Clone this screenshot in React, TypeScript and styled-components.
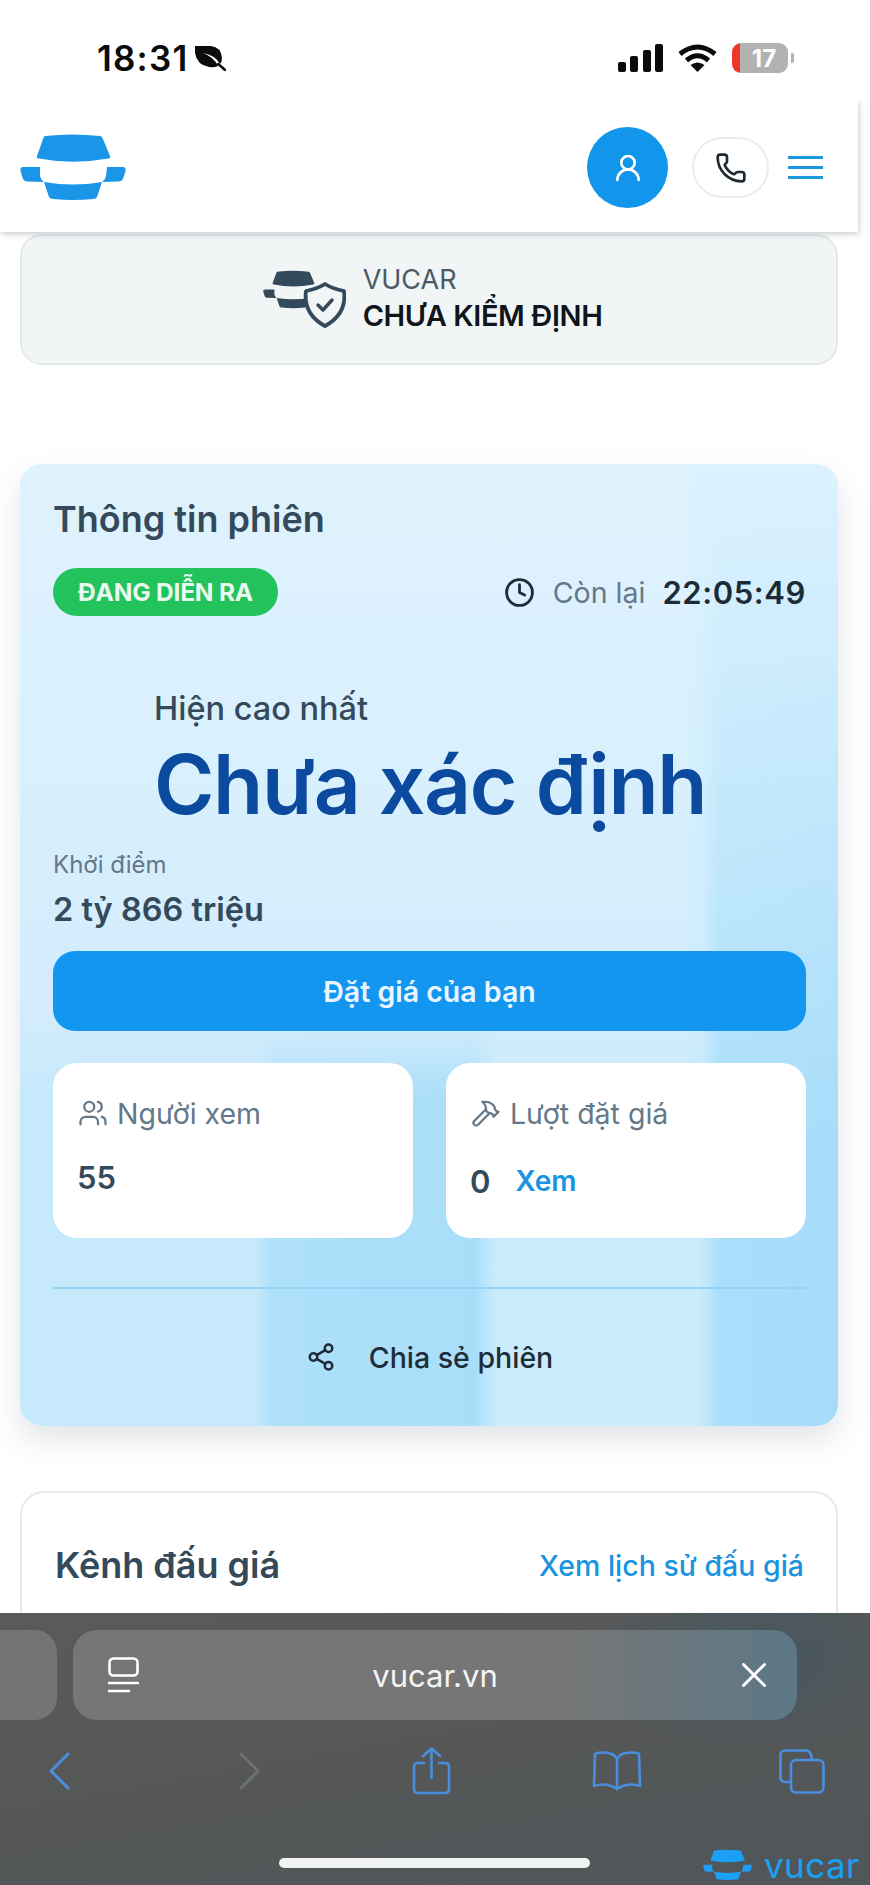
import React from "react";
import styled, { createGlobalStyle } from "styled-components";
import { UserRound, Phone, Clock, Users, Hammer, Share2, X } from "lucide-react";

const Global = createGlobalStyle`
  html, body { margin: 0; padding: 0; background: #fff; }
  * { box-sizing: border-box; }
  body { font-family: Inter, "Liberation Sans", sans-serif; }
`;

const Page = styled.div`
  position: relative;
  width: 870px;
  height: 1885px;
  display: flex;
  flex-direction: column;
  overflow: hidden;
  background: #fff;
`;

const StatusBar = styled.div`
  height: 100px;
  flex: none;
  display: flex;
  align-items: flex-start;
  justify-content: space-between;
  padding: 43px 82px 0 97px;
  background: #fff;
`;
const StatusLeft = styled.div`
  display: flex;
  align-items: center;
  gap: 6px;
  height: 30px;
`;
const Time = styled.span`
  font-size: 35px;
  font-weight: 600;
  line-height: 30px;
  color: #0b0b0b;
  letter-spacing: 1.2px;
`;
const StatusRight = styled.div`
  display: flex;
  align-items: center;
  gap: 15px;
  height: 30px;
`;
const Battery = styled.div`
  position: relative;
  width: 56px;
  height: 30px;
  border-radius: 9px;
  background: linear-gradient(to right, #ee3527 0 8px, #b2b2b2 8px);
  display: flex;
  align-items: center;
  justify-content: center;
  padding-left: 8px;
  color: #fff;
  font-size: 24px;
  font-weight: 700;
  &::after {
    content: "";
    position: absolute;
    right: -6px;
    top: 10px;
    width: 3px;
    height: 10px;
    border-radius: 0 2px 2px 0;
    background: #b2b2b2;
  }
`;

const Header = styled.header`
  position: relative;
  z-index: 2;
  flex: none;
  width: 858px;
  height: 132px;
  background: #fff;
  display: flex;
  align-items: center;
  justify-content: space-between;
  padding: 3px 35px 0 20px;
  box-shadow: 1px 2px 6px rgba(60, 70, 75, 0.28);
  clip-path: inset(0 -10px -14px 0);
`;
const HeaderActions = styled.div`
  display: flex;
  align-items: center;
`;
const Avatar = styled.div`
  width: 81px;
  height: 81px;
  border-radius: 50%;
  background: #1296eb;
  color: #fff;
  display: flex;
  align-items: center;
  justify-content: center;
`;
const PhoneButton = styled.div`
  width: 77px;
  height: 61px;
  margin-left: 24px;
  border-radius: 31px;
  background: #fff;
  border: 2px solid #e9ecec;
  color: #1e2a32;
  display: flex;
  align-items: center;
  justify-content: center;
`;
const Burger = styled.div`
  width: 35px;
  margin-left: 19px;
  display: flex;
  flex-direction: column;
  gap: 7px;
  span {
    display: block;
    height: 3px;
    background: #1d97e0;
  }
`;

const Content = styled.main`
  flex: 1;
  min-height: 0;
  overflow: hidden;
  padding: 2px 32px 0 20px;
`;
const InspectCard = styled.section`
  height: 131px;
  border-radius: 22px;
  border: 2px solid #e3e9eb;
  background: #f1f5f6;
  display: flex;
  align-items: center;
  justify-content: center;
  gap: 17px;
  padding: 0 0 4px 6px;
`;
const InspectText = styled.div`
  display: flex;
  flex-direction: column;
`;
const InspectBrand = styled.span`
  font-size: 27px;
  line-height: 36px;
  color: #4a5a66;
`;
const InspectStatus = styled.span`
  font-size: 29px;
  line-height: 36px;
  font-weight: 600;
  color: #0f151a;
  letter-spacing: -0.4px;
`;

const InfoCard = styled.section`
  margin-top: 99px;
  height: 962px;
  border-radius: 22px;
  padding: 33px 32px 0 33px;
  box-shadow: 0 14px 30px rgba(70, 90, 105, 0.16);
  background:
    linear-gradient(to bottom, #dff3fe 0%, #d9f0fd 30%, #d2ecfc 58%, rgba(210, 236, 252, 0) 66%) left top / 670px 100% no-repeat,
    linear-gradient(to bottom, #dcf2fe 0%, rgba(220, 242, 254, 0) 72%) right top / 150px 100% no-repeat,
    linear-gradient(to right, #c6e9fc 0, #c6e9fc 236px, #aee0fa 252px, #a9def9 455px, #c9ebfc 475px, #c9ebfc 680px, #aadffa 700px, #a6dcfa 100%);
`;
const CardTitle = styled.h2`
  margin: 0;
  font-size: 36px;
  line-height: 44px;
  font-weight: 600;
  color: #34495a;
`;
const MetaRow = styled.div`
  margin-top: 27px;
  display: flex;
  align-items: center;
  justify-content: space-between;
`;
const Badge = styled.span`
  height: 48px;
  width: 225px;
  border-radius: 24px;
  background: #22c25c;
  color: #eaf9ef;
  font-size: 24.5px;
  font-weight: 700;
  letter-spacing: -0.2px;
  display: flex;
  align-items: center;
  justify-content: center;
`;
const Countdown = styled.div`
  display: flex;
  align-items: center;
  color: #1e2d38;
`;
const RemainLabel = styled.span`
  margin-left: 18px;
  font-size: 28.5px;
  color: #64788a;
`;
const RemainTime = styled.span`
  margin-left: 17px;
  font-size: 31px;
  font-weight: 600;
  color: #1c2b36;
  letter-spacing: 0.6px;
`;
const Highest = styled.div`
  margin-top: 73px;
  padding-left: 101px;
`;
const HighestLabel = styled.div`
  font-size: 32.5px;
  line-height: 40px;
  font-weight: 500;
  color: #34495a;
`;
const HighestValue = styled.div`
  margin-top: 11px;
  font-size: 82px;
  line-height: 90px;
  font-weight: 600;
  color: #0b4a9e;
  letter-spacing: -1.3px;
  white-space: nowrap;
`;
const StartLabel = styled.div`
  margin-top: 20px;
  font-size: 24px;
  line-height: 30px;
  color: #64788a;
`;
const StartValue = styled.div`
  margin-top: 10px;
  font-size: 32.5px;
  line-height: 40px;
  font-weight: 600;
  color: #34495a;
`;
const BidButton = styled.button`
  display: block;
  width: 100%;
  margin-top: 21px;
  height: 80px;
  border: 0;
  border-radius: 22px;
  background: #1296f0;
  color: #eaf5fe;
  font-family: inherit;
  font-size: 28.5px;
  font-weight: 600;
`;
const Stats = styled.div`
  margin-top: 32px;
  display: grid;
  grid-template-columns: 1fr 1fr;
  gap: 33px;
`;
const StatCard = styled.div`
  height: 175px;
  border-radius: 24px;
  background: #fff;
  padding: 30px 0 0 25px;
`;
const StatLabel = styled.div`
  display: flex;
  align-items: center;
  gap: 9px;
  height: 40px;
  font-size: 28.5px;
  color: #64788a;
`;
const StatValue = styled.div<{ $gap: number }>`
  margin-top: ${(p) => p.$gap}px;
  height: 40px;
  display: flex;
  align-items: center;
  gap: 25px;
  font-size: 31px;
  font-weight: 600;
  color: #34495a;
  margin-left: -1px;
`;
const StatLink = styled.span`
  font-size: 28px;
  font-weight: 600;
  color: #1a93e0;
`;
const Divider = styled.div`
  margin-top: 49px;
  height: 2px;
  background: #97d3f6;
`;
const ShareRow = styled.div`
  margin-top: 48px;
  height: 40px;
  display: flex;
  align-items: center;
  justify-content: center;
  gap: 33px;
  font-size: 28.5px;
  font-weight: 500;
  color: #1e2d38;
`;

const AuctionCard = styled.section`
  margin-top: 65px;
  height: 260px;
  border: 2px solid #e6e9eb;
  border-radius: 24px;
  background: #fff;
  padding: 50px 32px 0 33px;
`;
const AuctionHead = styled.div`
  display: flex;
  align-items: center;
  justify-content: space-between;
  height: 44px;
`;
const AuctionTitle = styled.h2`
  margin: 0;
  font-size: 36px;
  font-weight: 600;
  color: #34495a;
`;
const AuctionLink = styled.span`
  font-size: 28.5px;
  font-weight: 500;
  color: #1a93e0;
`;

const Safari = styled.footer`
  position: relative;
  z-index: 3;
  flex: none;
  height: 272px;
  padding-top: 17px;
  background:
    radial-gradient(ellipse 170px 100px at 760px 40px, #46575f 0%, rgba(70, 87, 95, 0) 100%),
    linear-gradient(170deg, #5a5a5a 0%, #565757 45%, #4f5659 100%);
`;
const PillRow = styled.div`
  display: flex;
  gap: 16px;
  height: 90px;
`;
const SidePill = styled.div`
  width: 57px;
  border-radius: 0 22px 22px 0;
  background: #747474;
`;
const UrlPill = styled.div`
  width: 724px;
  border-radius: 24px;
  background: linear-gradient(to right, #767676 0%, #767676 68%, #5c7886 100%);
  display: flex;
  align-items: center;
  justify-content: space-between;
  padding: 0 22px 0 35px;
  color: #fff;
`;
const UrlText = styled.span`
  font-size: 31px;
  color: #f4f4f4;
  margin-right: 2px;
`;
const ToolBar = styled.div`
  margin-top: 27px;
  height: 48px;
  display: flex;
  align-items: center;
`;
const ToolSlot = styled.div<{ $left: number }>`
  margin-left: ${(p) => p.$left}px;
  display: flex;
`;
const HomeRow = styled.div`
  margin-top: 63px;
  display: flex;
  justify-content: center;
  padding-right: 1px;
`;
const HomeBar = styled.div`
  width: 311px;
  height: 10px;
  border-radius: 5px;
  background: #f0f3f0;
`;
const Watermark = styled.div`
  position: absolute;
  left: 702px;
  bottom: 4px;
  display: flex;
  align-items: center;
  gap: 11px;
`;
const WatermarkText = styled.span`
  font-size: 35px;
  line-height: 30px;
  font-weight: 400;
  letter-spacing: 0.4px;
  color: #1ca0f5;
`;

const LogoShapes = ({ fill }: { fill: string }) => (
  <g fill={fill}>
    <path d="M45 136 Q73 133 100 136 Q102 136 103 139 L110 156 Q111 158 108 158.5 Q73 165 39 158.5 Q36 158 37 156 L43 139 Q44 136 45 136 Z" />
    <path d="M23 167 L40 167 L40 176 Q41 180 44 182 L27 181.5 Q24 181 23 179 L20.5 171 Q20 167 23 167 Z" />
    <path d="M107 167 L123 167 Q126 167 125.5 171 L123 179 Q122 181 119 181.5 L102 182 Q105 180 106 176 Z" />
    <path d="M44 182 Q73 187 102 182 L97 197 Q96 199 93 199 Q73 201 53 199 Q50 199 49 197 Z" />
  </g>
);

const Logo = ({ width, height, fill }: { width: number; height: number; fill: string }) => (
  <svg width={width} height={height} viewBox="20 133 106 69">
    <LogoShapes fill={fill} />
  </svg>
);

const InspectIcon = () => (
  <svg width="84" height="60" viewBox="0 0 84 60">
    <g transform="translate(1 2) scale(0.57) translate(-20 -133)">
      <LogoShapes fill="#34495a" />
    </g>
    <path
      d="M63 16 Q71 21 82 23 Q85 46 63 58 Q41 46 44 23 Q55 21 63 16 Z"
      fill="#f1f5f6"
      stroke="#34495a"
      strokeWidth="3.8"
      strokeLinejoin="round"
    />
    <path d="M56 37 L61 42 L70 32" fill="none" stroke="#34495a" strokeWidth="3.4" strokeLinecap="round" strokeLinejoin="round" />
  </svg>
);

const LeafIcon = () => (
  <svg width="32" height="26" viewBox="0 0 32 26">
    <path d="M1 1 L17 1 Q27 2 28 13 Q28 17 26 19 Q21 10 9 8 Q20 12 24 21 Q20 23 15 22 Q3 20 1 8 Z" fill="#0b0b0b" />
    <path d="M24 19 Q28 22 31 25" fill="none" stroke="#0b0b0b" strokeWidth="2.6" strokeLinecap="round" />
  </svg>
);

const SignalIcon = () => (
  <svg width="45" height="28" viewBox="0 0 45 28" fill="#0b0b0b">
    <rect x="0" y="18" width="8" height="10" rx="2" />
    <rect x="12" y="12" width="8" height="16" rx="2" />
    <rect x="25" y="6" width="8" height="22" rx="2" />
    <rect x="37" y="0" width="8" height="28" rx="2" />
  </svg>
);

const WifiIcon = () => (
  <svg width="39" height="28" viewBox="0 0 39 28" fill="none" stroke="#0b0b0b" strokeWidth="5">
    <path d="M2 10 Q19.5 -4 37 10" />
    <path d="M8.5 16.5 Q19.5 7 30.5 16.5" />
    <path d="M19.5 28 L12.5 21 Q19.5 16 26.5 21 Z" fill="#0b0b0b" stroke="none" />
  </svg>
);

const TabsLeft = () => (
  <svg width="31" height="36" viewBox="0 0 31 36" fill="none" stroke="#fff" strokeWidth="2.6" strokeLinecap="round">
    <rect x="1.5" y="1.5" width="28" height="17" rx="4" />
    <path d="M1 26 H30" />
    <path d="M1 34 H21" />
  </svg>
);

const BackIcon = ({ color }: { color: string }) => (
  <svg width="21" height="38" viewBox="0 0 21 38" fill="none" stroke={color} strokeWidth="3" strokeLinecap="round" strokeLinejoin="round">
    <path d="M19 2 L2 19 L19 36" />
  </svg>
);
const ForwardIcon = ({ color }: { color: string }) => (
  <svg width="21" height="38" viewBox="0 0 21 38" fill="none" stroke={color} strokeWidth="3" strokeLinecap="round" strokeLinejoin="round">
    <path d="M2 2 L19 19 L2 36" />
  </svg>
);
const ShareIcon = () => (
  <svg width="39" height="48" viewBox="0 0 39 48" fill="none" stroke="#4a8fdf" strokeWidth="2.6" strokeLinecap="round" strokeLinejoin="round">
    <path d="M12 16 H6 Q2 16 2 20 V42 Q2 46 6 46 H33 Q37 46 37 42 V20 Q37 16 33 16 H27" />
    <path d="M19.5 31 V2" />
    <path d="M11 9 L19.5 1.5 L28 9" />
  </svg>
);
const BookIcon = () => (
  <svg width="50" height="40" viewBox="0 0 50 40" fill="none" stroke="#4a8fdf" strokeWidth="2.6" strokeLinecap="round" strokeLinejoin="round">
    <path d="M25 8 Q22 1.5 11 1.5 Q5 1.5 3 3 L2 35 Q14 31 25 38 Q36 31 48 35 L47 3 Q45 1.5 39 1.5 Q28 1.5 25 8 Z" />
    <path d="M25 8 V38" />
  </svg>
);
const CopyIcon = () => (
  <svg width="46" height="45" viewBox="0 0 46 45" fill="none" stroke="#4a8fdf" strokeWidth="2.6" strokeLinejoin="round">
    <path d="M11 33 H6 Q1.5 33 1.5 28 V6 Q1.5 1.5 6 1.5 H27 Q32 1.5 33 10" />
    <rect x="12" y="11" width="32.5" height="32.5" rx="5" />
  </svg>
);

export default function App() {
  return (
    <Page>
      <Global />
      <StatusBar>
        <StatusLeft>
          <Time>18:31</Time>
          <LeafIcon />
        </StatusLeft>
        <StatusRight>
          <SignalIcon />
          <WifiIcon />
          <Battery>17</Battery>
        </StatusRight>
      </StatusBar>

      <Header>
        <Logo width={106} height={69} fill="#1a96e8" />
        <HeaderActions>
          <Avatar>
            <UserRound size={32} strokeWidth={2} />
          </Avatar>
          <PhoneButton>
            <Phone size={32} strokeWidth={2} />
          </PhoneButton>
          <Burger>
            <span />
            <span />
            <span />
          </Burger>
        </HeaderActions>
      </Header>

      <Content>
        <InspectCard>
          <InspectIcon />
          <InspectText>
            <InspectBrand>VUCAR</InspectBrand>
            <InspectStatus>CHƯA KIỂM ĐỊNH</InspectStatus>
          </InspectText>
        </InspectCard>

        <InfoCard>
          <CardTitle>Thông tin phiên</CardTitle>
          <MetaRow>
            <Badge>ĐANG DIỄN RA</Badge>
            <Countdown>
              <Clock size={31} strokeWidth={2.2} />
              <RemainLabel>Còn lại</RemainLabel>
              <RemainTime>22:05:49</RemainTime>
            </Countdown>
          </MetaRow>
          <Highest>
            <HighestLabel>Hiện cao nhất</HighestLabel>
            <HighestValue>Chưa xác định</HighestValue>
          </Highest>
          <StartLabel>Khởi điểm</StartLabel>
          <StartValue>2 tỷ 866 triệu</StartValue>
          <BidButton>Đặt giá của bạn</BidButton>
          <Stats>
            <StatCard>
              <StatLabel>
                <Users size={30} strokeWidth={1.8} />
                Người xem
              </StatLabel>
              <StatValue $gap={24}>55</StatValue>
            </StatCard>
            <StatCard>
              <StatLabel>
                <Hammer size={30} strokeWidth={1.8} />
                Lượt đặt giá
              </StatLabel>
              <StatValue $gap={28}>
                0<StatLink>Xem</StatLink>
              </StatValue>
            </StatCard>
          </Stats>
          <Divider />
          <ShareRow>
            <Share2 size={30} strokeWidth={2} />
            Chia sẻ phiên
          </ShareRow>
        </InfoCard>

        <AuctionCard>
          <AuctionHead>
            <AuctionTitle>Kênh đấu giá</AuctionTitle>
            <AuctionLink>Xem lịch sử đấu giá</AuctionLink>
          </AuctionHead>
        </AuctionCard>
      </Content>

      <Safari>
        <PillRow>
          <SidePill />
          <UrlPill>
            <TabsLeft />
            <UrlText>vucar.vn</UrlText>
            <X size={42} strokeWidth={1.7} />
          </UrlPill>
        </PillRow>
        <ToolBar>
          <ToolSlot $left={49}>
            <BackIcon color="#4a8fdf" />
          </ToolSlot>
          <ToolSlot $left={169}>
            <ForwardIcon color="#6d7173" />
          </ToolSlot>
          <ToolSlot $left={152}>
            <ShareIcon />
          </ToolSlot>
          <ToolSlot $left={141}>
            <BookIcon />
          </ToolSlot>
          <ToolSlot $left={137}>
            <CopyIcon />
          </ToolSlot>
        </ToolBar>
        <HomeRow>
          <HomeBar />
        </HomeRow>
        <Watermark>
          <Logo width={51} height={32} fill="#1ca0f5" />
          <WatermarkText>vucar</WatermarkText>
        </Watermark>
      </Safari>
    </Page>
  );
}
